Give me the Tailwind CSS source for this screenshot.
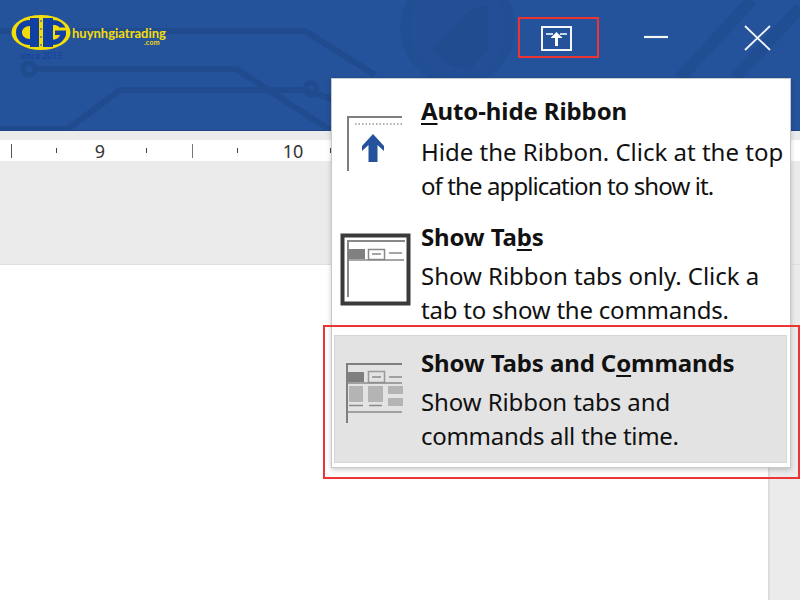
<!DOCTYPE html>
<html>
<head>
<meta charset="utf-8">
<script src="https://cdn.jsdelivr.net/npm/@tailwindcss/browser@4"></script>
</head>
<body class="m-0">
<div class="relative w-[800px] h-[600px] overflow-hidden bg-white font-['Noto_Sans',sans-serif] flex flex-col">
  <!-- title bar -->
  <header class="relative h-[131px] shrink-0 bg-[#24539c] border-b border-[#1c4585]">
    <svg class="absolute inset-0" width="800" height="131" viewBox="0 0 800 131" fill="none" stroke="#204b8e" stroke-width="6">
      <path d="M0 31H305L375 75"/>
      <path d="M35 69H236L330 130"/>
      <path d="M68 129L120 90H305L335 100"/>
      <circle cx="29" cy="69" r="6" stroke-width="5"/>
      <circle cx="311" cy="89" r="6" stroke-width="5"/>
      <path d="M0 128H70" stroke-width="4"/>
      <circle cx="458" cy="28" r="53" fill="#234f97" stroke="#224e94" stroke-width="9"/>
      <path d="M432 50L470 10L488 5V50L472 68C460 70 445 66 432 50Z" fill="#214c90" stroke="none"/>
      <path d="M680 78L752 0M735 78L800 8" stroke-width="12" opacity=".6"/>
    </svg>
    <div class="absolute left-[11px] top-[15px] flex items-start">
      <div class="flex flex-col items-center w-[60px]">
        <svg width="60" height="36" viewBox="0 0 60 36">
          <ellipse cx="30" cy="17.500" rx="29.500" ry="17.500" fill="#f4dc08"/>
          <path d="M19 5C10 5 5 11 5 17.500C5 24 10 30 19 30V24C14 24 11 21 11 17.500C11 14 14 11 19 11Z" fill="#1140a5"/>
          <rect x="19" y="3" width="9" height="29" fill="#1140a5"/>
          <rect x="32" y="3" width="10" height="29" fill="#1140a5"/>
          <path d="M42 5C48 5 52 8 54.500 12.500H48.500C47 10.500 45 10 42 10Z" fill="#1140a5"/>
          <path d="M44 15.500H55V20C53 26 48 30 42 30V24.500C46 24.500 48 22.500 49 20H44Z" fill="#1140a5"/>
          <path d="M30 5V31" stroke="#1140a5" stroke-width="1" stroke-dasharray="2 6"/>
        </svg>
        <span class="text-[8.500px] leading-[10px] font-medium text-[#173c9a] font-['Open_Sans',sans-serif]">since 2013</span>
      </div>
      <div class="flex flex-col items-end mt-[12px] ml-[1px]">
        <span class="text-[13px] leading-[12px] font-bold text-[#f4dc08] font-['Lato',sans-serif] whitespace-nowrap">huynhgiatrading</span>
        <span class="text-[7px] leading-[4px] font-bold text-[#f4dc08] font-['Lato',sans-serif] tracking-[0.3px] mr-[6px] mt-[1px]">.com</span>
      </div>
    </div>
    <!-- window controls -->
    <div class="absolute left-[518px] top-[17px] w-[81px] h-[41px] border-2 border-[#ee3333] flex items-center justify-center">
      <svg width="31" height="25" viewBox="0 0 31 25" fill="none" stroke="#fff" class="mr-[4px] mt-[1px]">
        <rect x="1" y="1" width="29" height="23" stroke-width="2" stroke="#f4f6fa"/>
        <path d="M5 8H12M19 8H26" stroke-width="1.300"/>
        <path d="M15.500 20V11" stroke-width="3"/>
        <path d="M9.500 12L15.500 6L21.500 12Z" fill="#fff" stroke="none"/>
      </svg>
    </div>
    <svg class="absolute left-[640px] top-[22px]" width="30" height="30" viewBox="0 0 30 30" stroke="#f2f4f8" stroke-width="2.200" fill="none"><path d="M4 15H28"/></svg>
    <svg class="absolute left-[742px] top-[22px]" width="32" height="32" viewBox="0 0 32 32" stroke="#f2f4f8" stroke-width="1.800" fill="none"><path d="M3 4L28 28M28 4L3 28"/></svg>
  </header>

  <div class="h-[9px] shrink-0 bg-[#ebebeb]"></div>

  <!-- ruler -->
  <div class="h-[21px] shrink-0 bg-white flex items-center text-[#333] text-[18px] leading-none pl-[11px]">
    <span class="w-px h-[14px] bg-[#555]"></span>
    <span class="w-px h-[5px] bg-[#444] ml-[44px]"></span>
    <span class="w-[16px] ml-[35px] text-center">9</span>
    <span class="w-px h-[5px] bg-[#444] ml-[38px]"></span>
    <span class="w-px h-[14px] bg-[#777] ml-[45px]"></span>
    <span class="w-px h-[5px] bg-[#444] ml-[44px]"></span>
    <span class="w-[22px] ml-[44px] text-center">10</span>
    <span class="w-px h-[5px] bg-[#444] ml-[26px]"></span>
  </div>

  <div class="h-[104px] shrink-0 bg-[#ebebeb] border-b border-[#dfdfdf]"></div>

  <div class="flex-1 flex">
    <div class="flex-1 bg-white"></div>
    <div class="w-[32px] bg-[#ebebeb] border-l-2 border-[#dcdcdc]"></div>
  </div>

  <!-- ribbon display menu -->
  <div class="absolute left-[331px] top-[78px] w-[460px] h-[390px] bg-white border border-[#c9c9c9] shadow-[0_2px_5px_rgba(0,0,0,0.2)] flex flex-col pl-[1px] pr-[2px] pt-[1px] text-[#111] text-[24px] leading-[34px] tracking-[-0.3px] whitespace-nowrap">
    <div class="h-[130px] flex">
      <div class="w-[88px] shrink-0 pt-[36px] pl-[14px]">
        <svg width="56" height="56" viewBox="0 0 56 56" fill="none">
          <path d="M1 55V1H55" stroke="#7f7f7f" stroke-width="2"/>
          <path d="M8 8H55" stroke="#666" stroke-width="1" stroke-dasharray="1.500 2"/>
          <path d="M26 18L37 30V35L30.500 29V46H21.500V29L15 35V30Z" fill="#24539c"/>
        </svg>
      </div>
      <div class="pt-[12px]">
        <p class="font-bold leading-[38px] tracking-[-0.1px]"><u class="underline-offset-3">A</u>uto-hide Ribbon</p>
        <p class="mt-[5px] tracking-[0px]">Hide the Ribbon. Click at the top</p>
        <p class="tracking-[-0.9px]">of the application to show it.</p>
      </div>
    </div>
    <div class="h-[125px] flex">
      <div class="w-[88px] shrink-0 pt-[23px] pl-[7px]">
        <svg width="71" height="73" viewBox="0 0 71 73" fill="none">
          <rect x="2.500" y="2.500" width="66" height="68" fill="#fff" stroke="#3a3a3a" stroke-width="4"/>
          <path d="M7 8H65M8 8V64" stroke="#888" stroke-width="2"/>
          <rect x="8" y="16" width="17" height="10" fill="#808080"/>
          <rect x="28.500" y="16.500" width="16" height="10" stroke="#888" stroke-width="1.500"/>
          <path d="M32 21H41M49 20H62M8 27H64" stroke="#888" stroke-width="1.500"/>
        </svg>
      </div>
      <div>
        <p class="font-bold leading-[38px] mt-[8px] tracking-[-0.1px]">Show Ta<u class="underline-offset-3">b</u>s</p>
        <p class="mt-[3px] tracking-[-0.03px]">Show Ribbon tabs only. Click a</p>
        <p class="tracking-[-0.22px]">tab to show the commands.</p>
      </div>
    </div>
    <div class="h-[128px] mx-[1px] flex bg-[#e3e3e3] border border-[#d6d6d6]">
      <div class="w-[86px] shrink-0 pt-[27px] pl-[10px]">
        <svg width="58" height="60" viewBox="0 0 58 60" fill="none">
          <path d="M2 60V1H57" stroke="#7f7f7f" stroke-width="2"/>
          <rect x="2" y="9" width="17" height="10" fill="#7f7f7f"/>
          <rect x="23.500" y="8.500" width="16" height="11" stroke="#999" stroke-width="1.500"/>
          <path d="M27 14H36M44 14H57M2 20H57" stroke="#8a8a8a" stroke-width="1.500"/>
          <rect x="4" y="23" width="14" height="16" fill="#b4b4b4"/>
          <rect x="23" y="23" width="15" height="16" fill="#b4b4b4"/>
          <rect x="43" y="23" width="15" height="8" fill="#b4b4b4"/>
          <rect x="43" y="35" width="15" height="8" fill="#b4b4b4"/>
          <path d="M4 42.500H18M24 42.500H37M2 49H57" stroke="#8a8a8a" stroke-width="1.500"/>
        </svg>
      </div>
      <div>
        <p class="font-bold leading-[38px] mt-[8px] tracking-[-0.1px]">Show Tabs and C<u class="underline-offset-3">o</u>mmands</p>
        <p class="mt-[3px] tracking-[-0.1px]">Show Ribbon tabs and</p>
        <p>commands all the time.</p>
      </div>
    </div>
  </div>

  <!-- red highlight around the active option -->
  <div class="absolute left-[323px] top-[325px] w-[477px] h-[154px] border-2 border-[#ee3333] pointer-events-none"></div>
</div>
</body>
</html>
